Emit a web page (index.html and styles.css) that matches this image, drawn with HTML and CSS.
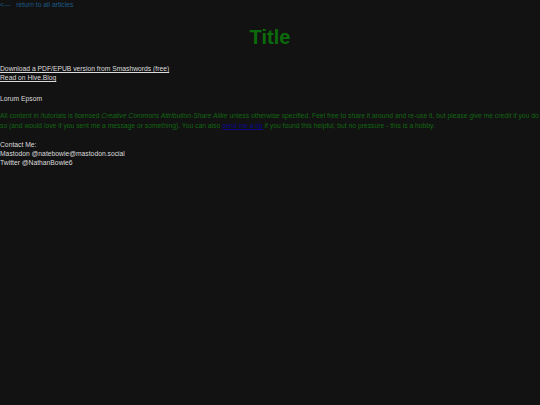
FILE: index.html
```html
<!DOCTYPE html>
<html lang="en">
<head>
    <meta charset="UTF-8">
    <title>Title</title>
    <link rel="stylesheet" href="styles.css">
</head>
<body>
<a class="back-link" href="#">&lt;--- &nbsp; return to all articles</a>

<h1 class="title">Title</h1>

<p class="downloads">
    <a href="#">Download a PDF/EPUB version from Smashwords (free)</a><br>
    <a href="#">Read on Hive.Blog</a>
</p>

<p class="content">Lorum Epsom</p>

<p class="license">
    All content in /tutorials is licensed <em>Creative Commons Attribution-Share Alike</em> unless otherwise specified. Feel free to share it around and re-use it, but please give me credit if you do so (and would love if you sent me a message or something). You can also <a class="tip" href="#">send me a tip</a> if you found this helpful, but no pressure - this is a hobby.
</p>

<p class="contact">
    Contact Me:<br>
    Mastodon @natebowie@mastodon.social<br>
    Twitter @NathanBowie6
</p>
</body>
</html>
```

FILE: styles.css
```css
body {
    margin: 0;
    background-color: #121212;
    color: #dcdcdc;
    font-family: "Liberation Sans", Arial, sans-serif;
    font-size: 6.75px;
    line-height: 9px;
}

.back-link {
    display: block;
    color: #1d5a86;
    text-decoration: none;
}

.title {
    margin: 15px 0 0;
    text-align: center;
    color: #0b6b0b;
    font-size: 20px;
    line-height: 26px;
}

.downloads {
    margin: 14px 0 0;
}

.downloads a {
    color: #dcdcdc;
}

.content {
    margin: 12px 0 0;
}

.license {
    margin: 8px 0 0;
    color: #136613;
    line-height: 10px;
}

.tip {
    color: #0b0b8a;
}

.contact {
    margin: 9px 0 0;
}
```
